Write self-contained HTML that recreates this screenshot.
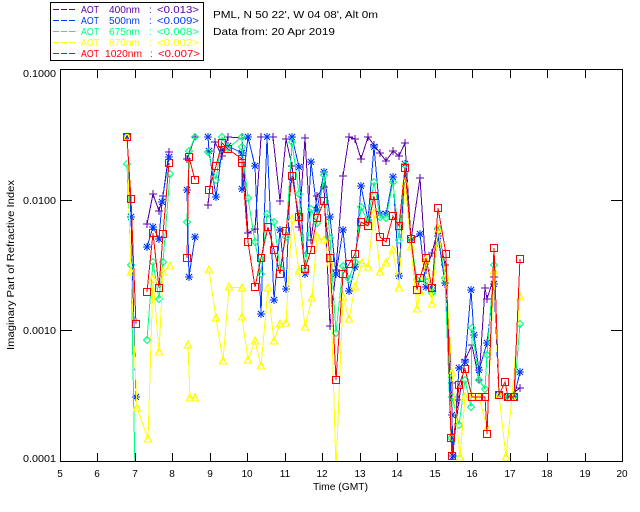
<!DOCTYPE html>
<html><head><meta charset="utf-8"><title>AOT Plot</title>
<style>
html,body{margin:0;padding:0;background:#fff;width:640px;height:512px;overflow:hidden}
svg{display:block}
text{font-family:"Liberation Sans",sans-serif;font-size:10px;fill:#000}
.s{fill:none;stroke-width:1;shape-rendering:crispEdges;stroke-linejoin:miter}
.p{stroke:#5a00a5;marker-start:url(#mp);marker-mid:url(#mp);marker-end:url(#mp)}
.b{stroke:#0037ff;marker-start:url(#mb);marker-mid:url(#mb);marker-end:url(#mb)}
.g{stroke:#00ff80;marker-start:url(#mg);marker-mid:url(#mg);marker-end:url(#mg)}
.y{stroke:#ffff00;marker-start:url(#my);marker-mid:url(#my);marker-end:url(#my)}
.r{stroke:#ff0000;marker-start:url(#mr);marker-mid:url(#mr);marker-end:url(#mr)}
.a{stroke:#000;stroke-width:1;fill:none;shape-rendering:crispEdges}
.lp{fill:#5a00a5}.lb{fill:#0037ff}.lg{fill:#00ff80}.ly{fill:#ffff00}.lr{fill:#ff0000}
</style></head><body>
<svg width="640" height="512" viewBox="0 0 640 512" xmlns="http://www.w3.org/2000/svg">
<defs>
<marker id="mp" markerUnits="userSpaceOnUse" markerWidth="14" markerHeight="14" refX="7" refY="7" overflow="visible"><path d="M7 3V11M3 7H11" fill="none" stroke="#5a00a5" shape-rendering="crispEdges"/></marker>
<marker id="mb" markerUnits="userSpaceOnUse" markerWidth="14" markerHeight="14" refX="7" refY="7" overflow="visible"><path d="M7 3V11M3 7H11M4 4L10 10M4 10L10 4" fill="none" stroke="#0037ff" stroke-width="1.2" shape-rendering="crispEdges"/></marker>
<marker id="mg" markerUnits="userSpaceOnUse" markerWidth="14" markerHeight="14" refX="7" refY="7" overflow="visible"><path d="M7 3.5L10.5 7L7 10.5L3.5 7Z" fill="none" stroke="#00ff80" shape-rendering="crispEdges"/></marker>
<marker id="my" markerUnits="userSpaceOnUse" markerWidth="14" markerHeight="14" refX="7" refY="7" overflow="visible"><path d="M7 3L10.5 10H3.5Z" fill="none" stroke="#ffff00" stroke-width="1.2" shape-rendering="crispEdges"/></marker>
<marker id="mr" markerUnits="userSpaceOnUse" markerWidth="14" markerHeight="14" refX="7" refY="7" overflow="visible"><rect x="3.5" y="3.5" width="7" height="7" fill="none" stroke="#ff0000" stroke-width="1.4" shape-rendering="crispEdges"/></marker>
</defs>

<!-- legend -->
<rect class="a" x="50.5" y="2.5" width="153" height="58"/>
<g shape-rendering="crispEdges" stroke-width="1" fill="none">
<path stroke="#5a00a5" d="M53 9.5H59M61 9.5H67M69 9.5H75"/>
<path stroke="#0037ff" d="M53 20.5H59M61 20.5H67M69 20.5H75"/>
<path stroke="#00ff80" d="M53 31.5H59M61 31.5H67M69 31.5H75"/>
<path stroke="#ffff00" d="M53 42.5H59M61 42.5H67M69 42.5H75"/>
<path stroke="#ff0000" d="M53 53.5H59M61 53.5H67M69 53.5H75"/>
</g>
<g class="lp"><text class="lp" x="81" y="13" textLength="18" lengthAdjust="spacingAndGlyphs">AOT</text><text class="lp" x="109" y="13" textLength="31" lengthAdjust="spacingAndGlyphs">400nm</text><text class="lp" x="149" y="13">:</text><text class="lp" x="157" y="13" textLength="42" lengthAdjust="spacingAndGlyphs">&lt;0.013&gt;</text></g>
<g><text class="lb" x="81" y="24" textLength="18" lengthAdjust="spacingAndGlyphs">AOT</text><text class="lb" x="109" y="24" textLength="31" lengthAdjust="spacingAndGlyphs">500nm</text><text class="lb" x="149" y="24">:</text><text class="lb" x="157" y="24" textLength="42" lengthAdjust="spacingAndGlyphs">&lt;0.009&gt;</text></g>
<g><text class="lg" x="81" y="35" textLength="18" lengthAdjust="spacingAndGlyphs">AOT</text><text class="lg" x="109" y="35" textLength="31" lengthAdjust="spacingAndGlyphs">675nm</text><text class="lg" x="149" y="35">:</text><text class="lg" x="157" y="35" textLength="42" lengthAdjust="spacingAndGlyphs">&lt;0.008&gt;</text></g>
<g><text class="ly" x="81" y="46" textLength="18" lengthAdjust="spacingAndGlyphs">AOT</text><text class="ly" x="109" y="46" textLength="31" lengthAdjust="spacingAndGlyphs">870nm</text><text class="ly" x="149" y="46">:</text><text class="ly" x="157" y="46" textLength="42" lengthAdjust="spacingAndGlyphs">&lt;0.002&gt;</text></g>
<g><text class="lr" x="81" y="57" textLength="18" lengthAdjust="spacingAndGlyphs">AOT</text><text class="lr" x="105" y="57" textLength="37" lengthAdjust="spacingAndGlyphs">1020nm</text><text class="lr" x="150" y="57">:</text><text class="lr" x="158" y="57" textLength="42" lengthAdjust="spacingAndGlyphs">&lt;0.007&gt;</text></g>
<text x="213" y="18" textLength="165" lengthAdjust="spacingAndGlyphs">PML, N 50 22', W 04 08', Alt 0m</text>
<text x="213" y="35" textLength="122" lengthAdjust="spacingAndGlyphs">Data from: 20 Apr 2019</text>

<!-- series -->
<polyline class="s p" points="147,224 153,194 159,211 163,196 169,152"/>
<polyline class="s p" points="187,159 195,137"/>
<polyline class="s p" points="208,205 215,142 222,156 228,137 242,138 248,233 255,229 261,137 267,137 273,137 280,201 286,139 292,166 299,227 305,138 311,240 317,196 324,187 330,326 336,270 343,176 349,137 355,139 361,159 368,137 374,145 380,153 386,161 393,151 399,156 405,143 411,240 420,178 426,270 432,253 438,229 445,265 452,383 452,456 459,400 465,360 472,345 479,380 485,288 487,299 494,277 499,395 508,397 520,388"/>

<polyline class="s b" points="127,137 131,217 136,397"/>
<polyline class="s b" points="147,247 153,227 159,239 162,202 169,157"/>
<polyline class="s b" points="187,190 189,277 195,237"/>
<polyline class="s b" points="208,137 209,151 216,197 222,150 228,146 242,153 242,189 248,137 255,166 261,314 267,137 274,300 280,230 286,289 292,137 299,167 305,274 311,162 317,210 324,172 330,217 336,274 343,230 349,291 355,267 361,186 368,220 374,147 380,214 386,214 393,177 399,276 405,164 411,240 420,234 426,287 432,288 438,236 445,283 452,415 453,456 459,368 465,362 471,290 474,335 479,370 487,343 494,284 499,395 508,397 514,397 520,372"/>

<polyline class="s g" points="127,164 131,265 135,470"/>
<polyline class="s g" points="147,340 153,262 159,299 163,262 170,174"/>
<polyline class="s g" points="187,222 189,151 195,137"/>
<polyline class="s g" points="208,152 216,180 222,137 228,148 242,137 242,147 248,198 255,242 261,274 267,214 274,222 280,268 286,237 292,142 299,194 305,270 311,209 317,223 324,175 330,238 336,333 343,266 349,279 355,262 361,207 368,222 374,182 380,217 386,218 393,182 399,240 405,165 411,240 417,280 427,282 432,293 438,228 445,278 451,438 452,397 459,425 465,380 471,407 472,328 479,380 485,389 487,355 494,265 499,395 508,397 514,397 520,324"/>

<polyline class="s y" points="127,137 131,272 137,408 148,439 153,279 159,352 163,272 170,266"/>
<polyline class="s y" points="188,345 190,398 195,398"/>
<polyline class="s y" points="209,270 216,318 223,361 229,287 242,288 242,317 248,360 255,341 261,366 268,288 274,341 280,324 286,323 292,219 299,271 305,327 312,298 317,237 324,240 330,263 336,470 343,297 349,319 355,287 362,263 368,267 374,213 380,272 386,263 393,250 399,288 405,183 411,247 417,309 420,292 426,260 432,304 438,229 446,277 452,373 460,457 465,397 472,397 479,397 487,428 494,271 499,395 506,457 512,397 520,297"/>

<polyline class="s r" points="127,137 131,199 136,324"/>
<polyline class="s r" points="147,292 153,233 159,288 163,234 169,163"/>
<polyline class="s r" points="187,258 189,157 195,180"/>
<polyline class="s r" points="209,190 216,166 222,143 228,149 242,159 242,163 248,242 255,287 261,258 268,227 274,250 280,274 286,231 292,176 299,217 305,269 311,250 317,218 324,201 330,258 336,380 343,274 349,264 355,254 361,222 368,226 374,196 380,237 386,242 393,216 399,226 405,168 411,239 417,290 420,278 426,258 432,288 438,208 446,254 451,438 452,456 459,385 465,369 472,397 479,397 485,397 487,434 494,248 499,395 505,382 508,397 514,397 520,259"/>

<!-- mask overflow below axis -->
<rect x="61" y="462" width="562" height="12" fill="#fff"/>

<!-- axes -->
<rect class="a" x="60.5" y="69.5" width="562" height="392"/>
<path class="a" d="M97.5 461V453M135.5 461V453M172.5 461V453M210.5 461V453M247.5 461V453M285.5 461V453M322.5 461V453M360.5 461V453M397.5 461V453M435.5 461V453M472.5 461V453M510.5 461V453M547.5 461V453M585.5 461V453
M97.5 70V78M135.5 70V78M172.5 70V78M210.5 70V78M247.5 70V78M285.5 70V78M322.5 70V78M360.5 70V78M397.5 70V78M435.5 70V78M472.5 70V78M510.5 70V78M547.5 70V78M585.5 70V78
M61 200.5H72M61 330.5H72M611 200.5H622M611 330.5H622"/>

<!-- labels -->
<text x="23" y="77" textLength="33" lengthAdjust="spacingAndGlyphs">0.1000</text>
<text x="23" y="204" textLength="33" lengthAdjust="spacingAndGlyphs">0.0100</text>
<text x="23" y="334" textLength="33" lengthAdjust="spacingAndGlyphs">0.0010</text>
<text x="23" y="462" textLength="33" lengthAdjust="spacingAndGlyphs">0.0001</text>
<g text-anchor="middle">
<text x="60" y="477">5</text><text x="97" y="477">6</text><text x="135" y="477">7</text><text x="172" y="477">8</text><text x="210" y="477">9</text>
<text x="247" y="477">10</text><text x="285" y="477">11</text><text x="322" y="477">12</text><text x="360" y="477">13</text><text x="397" y="477">14</text>
<text x="435" y="477">15</text><text x="472" y="477">16</text><text x="510" y="477">17</text><text x="547" y="477">18</text><text x="585" y="477">19</text><text x="622" y="477">20</text>
</g>
<text x="313" y="490" textLength="55" lengthAdjust="spacingAndGlyphs">Time (GMT)</text>
<text transform="translate(14,350) rotate(-90)" textLength="170" lengthAdjust="spacingAndGlyphs">Imaginary Part of Refractive Index</text>
</svg>
</body></html>
